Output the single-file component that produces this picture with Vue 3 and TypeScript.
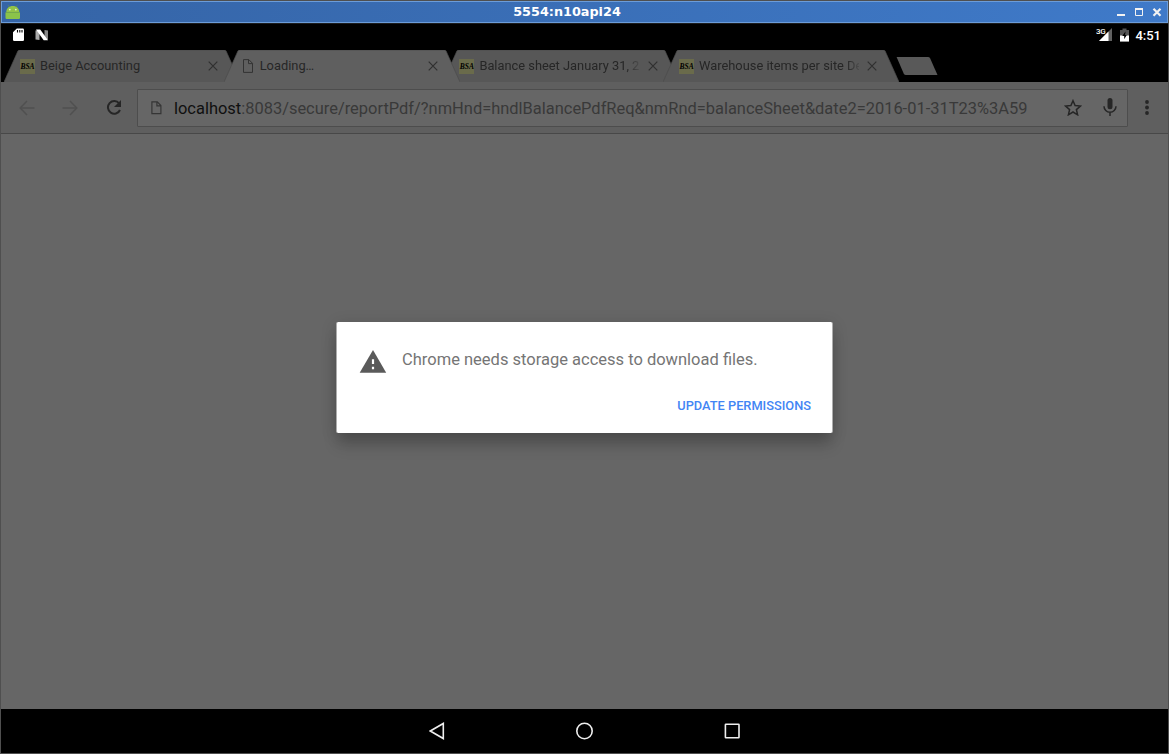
<script setup lang="ts">
interface Tab {
  title: string
  icon: 'bsa' | 'page'
  active?: boolean
  fade?: boolean
}

const tabs: Tab[] = [
  { title: 'Beige Accounting', icon: 'bsa' },
  { title: 'Loading…', icon: 'page', active: true },
  { title: 'Balance sheet January 31, 20', icon: 'bsa', fade: true },
  { title: 'Warehouse items per site De', icon: 'bsa', fade: true },
]
const host = 'localhost'
const path = ':8083/secure/reportPdf/?nmHnd=hndlBalancePdfReq&nmRnd=balanceSheet&date2=2016-01-31T23%3A59'
</script>

<template>
  <div class="window">
    <header class="titlebar">
      <svg class="android" width="16" height="16" viewBox="0 0 16 16">
        <path d="M3.2 1.2 4.7 3.4M12.3 1.2 10.8 3.4" stroke="#5f8a58" stroke-width=".9" />
        <path d="M1.2 8.2C1.4 4.2 4 2 7.8 2s6.300 2.200 6.500 6.200Z" fill="#92c348" />
        <path d="M.5 8.500h14.500v5.300q0 1.200-1.200 1.200H1.700Q.5 15 .5 13.800Z" fill="#8bc34a" />
        <path d="M.8 8.500h14" stroke="#78ad3f" stroke-width=".7" />
        <circle cx="4.800" cy="5.600" r=".9" fill="#e4f0d4" />
        <circle cx="10.800" cy="5.600" r=".9" fill="#e4f0d4" />
      </svg>
      <span class="window-title">5554:n10api24</span>
      <svg class="window-buttons" width="48" height="12" viewBox="0 0 48 12">
        <path d="M1 9h8" stroke="#f2f2f2" stroke-width="2" />
        <path d="M19.500 2.500h7v7h-7Z" fill="none" stroke="#f2f2f2" />
        <path d="M19 3h8" stroke="#f2f2f2" stroke-width="2" />
        <path d="m37.500 2.700 7 7m0-7-7 7" stroke="#f2f2f2" stroke-width="2.200" />
      </svg>
    </header>

    <div class="screen">
      <div class="statusbar">
        <svg width="12" height="14" viewBox="0 0 12 14">
          <path d="M3.800.5h6q1.200 0 1.200 1.200v10.100q0 1.200-1.200 1.200H1.200Q0 13 0 11.800V4.300Z" fill="#fff" />
          <path d="M4.500 2v2.500M6.800 2v2.500M9 2v2.500" stroke="#000" stroke-width="1.100" />
        </svg>
        <svg class="nougat" width="14" height="12" viewBox="0 0 14 12">
          <path d="M.5 1.500 4.500 1v10l-4-.5Z" fill="#aaa" />
          <path d="M9.500 1l3.500.5v9.300L9.500 9Z" fill="#888" />
          <path d="M1 .5h4.200l7.800 10.800H8.700Z" fill="#fff" />
        </svg>
        <div class="status-right">
          <span class="net">3G</span>
          <svg class="signal" width="13" height="13" viewBox="0 0 13 13">
            <path d="M0 13 13 0v13Z" fill="#606060" />
            <path d="M0 13 9.500 3.500V13Z" fill="#fff" />
          </svg>
          <svg class="battery" width="9" height="14" viewBox="0 0 9 14">
            <path d="M0 2h2.500V.5h4V2H9v11.500H0Z" fill="#555" />
            <path d="M0 7.500h9v6H0Z" fill="#fff" />
            <path d="M5.500 3.500 2.200 8.100h2v3.200L6.800 7H5.100Z" fill="#000" />
          </svg>
          <span class="clock">4:51</span>
        </div>
      </div>

      <nav class="tabstrip">
        <div v-for="tab in tabs" :key="tab.title" class="tab" :class="{ active: tab.active }">
          <svg class="tab-shape" width="236" height="32" viewBox="0 0 236 32">
            <path d="M0 32 14 .8Q14.500 0 15.500 0h205q1 0 1.500.8L236 32Z" />
            <path class="tab-edge" d="M0 32 14 .8Q14.500 0 15.500 0h205q1 0 1.500.8L236 32" />
          </svg>
          <span v-if="tab.icon === 'bsa'" class="favicon">BSA</span>
          <svg v-else class="tab-page" width="12" height="14" viewBox="0 0 12 14">
            <path d="M1.500.6h5.300l3.700 3.700v9.100h-9Z M6.500.6v4h4" />
          </svg>
          <span class="tab-title" :class="{ fade: tab.fade }">{{ tab.title }}</span>
          <svg class="tab-close" width="10" height="10" viewBox="0 0 10 10">
            <path d="m.7.700 8.600 8.600m0-8.600L.7 9.300" />
          </svg>
        </div>
        <svg class="new-tab" width="42" height="18" viewBox="0 0 42 18">
          <path d="M.6 0H32q1.500 0 2.200 1.400L41.500 18H10q-1.600 0-2.300-1.500Z" fill="#595959" />
        </svg>
      </nav>

      <div class="toolbar">
        <svg class="back" width="16" height="16" viewBox="0 0 16 16">
          <path d="M15.500 8H1.500M8 1 1.200 8 8 15" />
        </svg>
        <svg class="forward" width="16" height="16" viewBox="0 0 16 16">
          <path d="M.5 8h14M8 1l6.800 7L8 15" />
        </svg>
        <svg class="reload" width="16" height="16" viewBox="0 0 16 16">
          <path d="M13.200 3.500A6.300 6.300 0 1 0 14 10" fill="none" stroke="#262626" stroke-width="2" />
          <path d="M15 0v7H8Z" fill="#262626" />
        </svg>
        <div class="omnibox">
          <svg class="url-page" width="11" height="14" viewBox="0 0 11 14">
            <path d="M.9.900h5.400l3.600 3.600v8.100h-9Z M5.900.9v4h4" />
          </svg>
          <span class="url"><b>{{ host }}</b>{{ path }}</span>
          <svg class="star" width="18" height="17" viewBox="0 0 18 17">
            <path d="m9 1.700 2.100 4.900 5.300.5-4 3.500 1.200 5.200L9 13l-4.600 2.800 1.200-5.200-4-3.500 5.300-.5Z" />
          </svg>
          <svg class="mic" width="14" height="19" viewBox="0 0 14 19">
            <rect x="4.500" y="0" width="5" height="11.300" rx="2.500" fill="#262626" />
            <path d="M1 8.200a6 6 0 0 0 12 0M7 14v4" fill="none" stroke="#262626" stroke-width="1.500" />
          </svg>
        </div>
        <svg class="more" width="4" height="15" viewBox="0 0 4 15">
          <circle cx="2" cy="2" r="1.900" />
          <circle cx="2" cy="7.500" r="1.900" />
          <circle cx="2" cy="13" r="1.900" />
        </svg>
      </div>

      <main class="page">
        <section class="dialog">
          <div class="message">
            <svg width="27" height="23" viewBox="0 0 27 23">
              <path d="M13 0 26.200 22.800H-.3Z" fill="#5a5a5a" />
              <path d="M11.900 9.200h2.200v4.800h-2.200ZM11.900 16.800h2.200v2.500h-2.200Z" fill="#fff" />
            </svg>
            <span>Chrome needs storage access to download files.</span>
          </div>
          <button>UPDATE PERMISSIONS</button>
        </section>
      </main>

      <footer class="navbar">
        <svg width="16" height="18" viewBox="0 0 16 18">
          <path d="M14.300 1.500v15L1.300 9Z" />
        </svg>
        <svg class="home" width="18" height="18" viewBox="0 0 18 18">
          <circle cx="8.500" cy="9" r="7.700" />
        </svg>
        <svg width="16" height="16" viewBox="0 0 16 16">
          <rect x="1.400" y="1.200" width="13.600" height="13.600" rx=".5" />
        </svg>
      </footer>
    </div>
  </div>
</template>

<style scoped>
.window {
  box-sizing: border-box;
  width: 1169px;
  height: 754px;
  border: 1px solid #4f4f4f;
  background: #000;
  display: flex;
  flex-direction: column;
  overflow: hidden;
  font-family: Roboto, "Liberation Sans", sans-serif;
}
svg {
  display: block;
  flex: none;
}
.titlebar {
  box-sizing: border-box;
  height: 22px;
  flex: none;
  display: flex;
  align-items: flex-start;
  border: 1px solid #6c9cd8;
  background: linear-gradient(100deg, #3564a6, #3f7ac9);
}
.android {
  margin: 2px 0 0 3px;
}
.window-title {
  flex: 1;
  padding-right: 3px;
  text-align: center;
  font: bold 12.8px/20px "DejaVu Sans", sans-serif;
  color: #fff;
}
.window-buttons {
  margin: 4px 3px 0 0;
}
.screen {
  flex: 1;
  display: flex;
  flex-direction: column;
  border-top: 1px solid #1d1d1d;
}
.statusbar {
  height: 26px;
  flex: none;
  display: flex;
  align-items: flex-start;
  padding: 4px 7px 0 12px;
  box-sizing: border-box;
}
.nougat {
  margin: 1px 0 0 10px;
}
.status-right {
  margin-left: auto;
  display: flex;
  color: #fff;
}
.net {
  font-size: 8px;
  line-height: 8px;
  font-weight: 500;
  letter-spacing: -0.3px;
}
.signal {
  margin: 0 0 0 -6px;
}
.battery {
  margin-left: 8px;
}
.clock {
  margin-left: 6px;
  font-size: 13px;
  line-height: 15px;
  font-weight: 500;
}
.tabstrip {
  height: 32px;
  flex: none;
  display: flex;
  padding-left: 3px;
}
.tab {
  position: relative;
  width: 219.7px;
  height: 32px;
  box-sizing: border-box;
  flex: none;
  display: flex;
  align-items: center;
  padding-left: 16px;
}
.tab.active {
  z-index: 1;
}
.tab-shape {
  position: absolute;
  left: 0;
  top: 0;
  fill: #575757;
}
.tab-edge {
  fill: none;
  stroke: #4c4c4c;
  stroke-width: 0.7;
}
.active .tab-shape {
  fill: #5f5f5f;
}
.active .tab-edge {
  fill: none;
}
.favicon {
  position: relative;
  width: 15px;
  height: 15px;
  background: #6a6b4b;
  color: #000;
  font: italic bold 7.5px/15px "Liberation Serif", serif;
  text-align: center;
}
.tab-page {
  position: relative;
  width: 12px;
  margin: 0 1px 0 2px;
  fill: none;
  stroke: #333;
}
.tab-title {
  position: relative;
  width: 160px;
  margin-left: 5px;
  white-space: nowrap;
  font-size: 12.85px;
  line-height: 20px;
  color: #262626;
}
.tab-title.fade {
  -webkit-mask-image: linear-gradient(90deg, #000 147px, transparent 164px);
  mask-image: linear-gradient(90deg, #000 147px, transparent 164px);
}
.tab-close {
  position: relative;
  margin-left: 8.4px;
  fill: none;
  stroke: #303030;
  stroke-width: 1.200;
}
.new-tab {
  margin: 7px 0 0 13px;
}
.toolbar {
  box-sizing: border-box;
  height: 52px;
  flex: none;
  display: flex;
  align-items: center;
  padding-left: 18px;
  background: #5f5f5f;
  border-bottom: 1px solid #484848;
}
.back,
.forward {
  fill: none;
  stroke: #505050;
  stroke-width: 1.500;
}
.forward {
  margin-left: 27px;
}
.reload {
  margin-left: 28px;
}
.omnibox {
  box-sizing: border-box;
  width: 991px;
  height: 38px;
  margin-left: 15px;
  display: flex;
  align-items: center;
  background: #666;
  border: 1px solid #4d4d4d;
  border-radius: 1px;
}
.url-page {
  margin-left: 13px;
  fill: none;
  stroke: #353535;
  stroke-width: 1.200;
}
.url {
  width: 870px;
  margin-left: 12px;
  padding-top: 2px;
  white-space: nowrap;
  font-size: 16.450px;
  line-height: 24px;
  color: #393939;
}
.url b {
  font-weight: 400;
  color: #101010;
}
.star {
  margin-left: 20px;
  fill: none;
  stroke: #262626;
  stroke-width: 1.500;
}
.mic {
  margin-left: 21px;
}
.more {
  margin-left: 17px;
  fill: #262626;
}
.page {
  flex: 1;
  display: flex;
  align-items: flex-start;
  justify-content: center;
  background: #666;
}
.dialog {
  box-sizing: border-box;
  width: 497px;
  height: 111px;
  margin-top: 188px;
  padding: 27px 21px 0 23px;
  background: #fff;
  border: solid #adadad;
  border-width: 0 1px;
  border-radius: 2px;
  box-shadow: 0 14px 14px -2px rgba(0, 0, 0, 0.18), 0 3px 16px rgba(0, 0, 0, 0.16);
}
.message {
  display: flex;
  align-items: center;
  gap: 15px;
  height: 24px;
  white-space: nowrap;
  font-size: 16.500px;
  line-height: 24px;
  color: #757575;
}
.message svg {
  overflow: visible;
}
.message span {
  margin-top: -3px;
}
button {
  display: block;
  margin: 23px 0 0 auto;
  padding: 0;
  border: 0;
  background: none;
  white-space: nowrap;
  font: 500 12.800px/20px Roboto, sans-serif;
  color: #4285f4;
}
.navbar {
  height: 44px;
  flex: none;
  display: flex;
  align-items: center;
  gap: 130px;
  padding-left: 428px;
  fill: none;
  stroke: #eee;
  stroke-width: 1.600;
}
.home {
  margin-left: 1px;
}
</style>
